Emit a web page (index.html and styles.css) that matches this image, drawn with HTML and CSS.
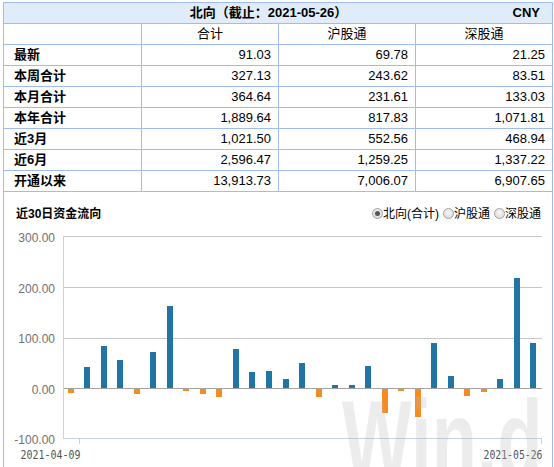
FILE: index.html
```html
<!DOCTYPE html>
<html lang="zh-CN">
<head>
<meta charset="utf-8">
<title>北向资金</title>
<link rel="stylesheet" href="styles.css">
</head>
<body>
<div class="panel">
  <div class="hdr"><span class="ttl">北向（截止：2021-05-26）</span><span class="cur">CNY</span></div>
  <div class="row colhead"><div class="c"></div><div class="c">合计</div><div class="c">沪股通</div><div class="c">深股通</div></div>
  <div class="row"><div class="c lab">最新</div><div class="c num">91.03</div><div class="c num">69.78</div><div class="c num">21.25</div></div>
  <div class="row"><div class="c lab">本周合计</div><div class="c num">327.13</div><div class="c num">243.62</div><div class="c num">83.51</div></div>
  <div class="row"><div class="c lab">本月合计</div><div class="c num">364.64</div><div class="c num">231.61</div><div class="c num">133.03</div></div>
  <div class="row"><div class="c lab">本年合计</div><div class="c num">1,889.64</div><div class="c num">817.83</div><div class="c num">1,071.81</div></div>
  <div class="row"><div class="c lab">近3月</div><div class="c num">1,021.50</div><div class="c num">552.56</div><div class="c num">468.94</div></div>
  <div class="row"><div class="c lab">近6月</div><div class="c num">2,596.47</div><div class="c num">1,259.25</div><div class="c num">1,337.22</div></div>
  <div class="row"><div class="c lab">开通以来</div><div class="c num">13,913.73</div><div class="c num">7,006.07</div><div class="c num">6,907.65</div></div>
  <div class="chart">
    <div class="chart-top">
      <span class="chart-title">近30日资金流向</span>
      <div class="radios">
        <span class="radio on"></span><span class="rl">北向(合计)</span>
        <span class="radio"></span><span class="rl">沪股通</span>
        <span class="radio"></span><span class="rl">深股通</span>
      </div>
    </div>
    <svg class="plot" width="548" height="250" viewBox="4 224 548 250">
      <g class="grid">
        <line x1="63" x2="542" y1="236.5" y2="236.5"/>
        <line x1="63" x2="542" y1="287.5" y2="287.5"/>
        <line x1="63" x2="542" y1="338.5" y2="338.5"/>
      </g>
      <g class="yl">
        <text x="55" y="242">300.00</text>
        <text x="55" y="292.5">200.00</text>
        <text x="55" y="343">100.00</text>
        <text x="55" y="393.5">0.00</text>
        <text x="55" y="444">-100.00</text>
      </g>
      <g class="pos">
        <rect x="84" y="367" width="6" height="21"/>
        <rect x="101" y="346" width="6" height="42"/>
        <rect x="117" y="360" width="6" height="28"/>
        <rect x="150" y="352" width="6" height="36"/>
        <rect x="167" y="306" width="6" height="82"/>
        <rect x="233" y="349" width="6" height="39"/>
        <rect x="249" y="372" width="6" height="16"/>
        <rect x="266" y="371" width="6" height="17"/>
        <rect x="283" y="379" width="6" height="9"/>
        <rect x="299" y="363" width="6" height="25"/>
        <rect x="332" y="385" width="6" height="3"/>
        <rect x="349" y="385" width="6" height="3"/>
        <rect x="365" y="366" width="6" height="22"/>
        <rect x="431" y="343" width="6" height="45"/>
        <rect x="448" y="376" width="6" height="12"/>
        <rect x="497" y="379" width="6" height="9"/>
        <rect x="514" y="278" width="6" height="110"/>
        <rect x="530" y="343" width="6" height="45"/>
      </g>
      <g class="neg">
        <rect x="68" y="389" width="6" height="4"/>
        <rect x="134" y="389" width="6" height="5"/>
        <rect x="183" y="389" width="6" height="2"/>
        <rect x="200" y="389" width="6" height="5"/>
        <rect x="216" y="389" width="6" height="8"/>
        <rect x="316" y="389" width="6" height="8"/>
        <rect x="382" y="389" width="6" height="24"/>
        <rect x="398" y="389" width="6" height="2"/>
        <rect x="415" y="389" width="6" height="28"/>
        <rect x="464" y="389" width="6" height="7"/>
        <rect x="481" y="389" width="6" height="3"/>
      </g>
      <line class="zero" x1="63" x2="542" y1="388.5" y2="388.5"/>
      <g class="axis">
        <line x1="63.5" x2="63.5" y1="236" y2="439"/>
        <line x1="63" x2="542" y1="438.5" y2="438.5"/>
        <line x1="79.5" x2="79.5" y1="438" y2="444"/>
        <line x1="541.5" x2="541.5" y1="438" y2="444"/>
      </g>
      <g class="xl">
        <text x="20.5" y="459" textLength="60" lengthAdjust="spacingAndGlyphs">2021-04-09</text>
        <text x="483.5" y="459" textLength="59" lengthAdjust="spacingAndGlyphs">2021-05-26</text>
      </g>
    </svg>
    <div class="watermark">Win.d</div>
  </div>
</div>
</body>
</html>
```

FILE: styles.css
```css
* { box-sizing: border-box; }
html, body { overflow: hidden; }
body {
  margin: 2px 0 0 3px;
  background: #fff;
  color: #000;
  font-family: "Liberation Sans", "Noto Sans CJK SC", sans-serif;
  font-size: 13px;
}
.panel {
  width: 550px;
  height: 480px;
  border: 1px solid #9ebcf0;
}
.hdr {
  display: grid;
  grid-template-columns: 1fr auto 1fr;
  height: 21px;
  line-height: 20px;
  background: #e1ecfa;
  border-bottom: 1px solid #9ebcf0;
  font-weight: bold;
}
.ttl { grid-column: 2; margin-right: 19px; }
.cur { grid-column: 3; justify-self: end; padding-right: 12px; }
.row {
  display: grid;
  grid-template-columns: 137px 137px 137px 137px;
  height: 21px;
  line-height: 20px;
  border-bottom: 1px solid #9ebcf0;
}
.c { border-left: 1px solid #9ebcf0; white-space: nowrap; }
.c:first-child { border-left: 0; }
.colhead .c { text-align: center; }
.lab { padding-left: 10px; font-weight: bold; }
.num { text-align: right; padding-right: 7px; }

.chart { position: relative; overflow: hidden; height: 300px; }
.chart-top {
  display: flex;
  justify-content: space-between;
  align-items: center;
  height: 32px;
  padding: 12px 11px 0 12px;
  line-height: 20px;
  font-size: 12px;
}
.chart-title { font-weight: bold; }
.radios { display: flex; align-items: center; }
.rl { margin-right: 4px; }
.rl:last-child { margin-right: 0; }
.radio {
  position: relative;
  width: 11px;
  height: 11px;
  margin-top: -1px;
  border-radius: 50%;
  border: 1px solid #a2a2a2;
  background: radial-gradient(circle at 50% 40%, #f6f6f6, #d6d6d6);
}
.radio.on::after {
  content: "";
  position: absolute;
  left: 2px;
  top: 2px;
  width: 5px;
  height: 5px;
  border-radius: 50%;
  background: #555;
}
.plot { display: block; }
.grid line { stroke: #c6c6c6; stroke-width: 1; }
.zero { stroke: #a3a3a3; stroke-width: 1; }
.axis line { stroke: #c4d2e4; stroke-width: 1; }
.yl text {
  text-anchor: end;
  font-family: "Liberation Sans", sans-serif;
  font-size: 12px;
  fill: #707070;
}
.xl text {
  font-family: "DejaVu Sans Mono", monospace;
  font-size: 11.5px;
  fill: #555;
}
.pos rect { fill: #2274a5; }
.neg rect { fill: #f68b1f; }
.watermark {
  position: absolute;
  left: 338px;
  top: 192px;
  font-family: "Liberation Sans", sans-serif;
  font-weight: bold;
  font-size: 112px;
  line-height: 112px;
  color: rgba(185, 185, 185, 0.28);
  white-space: nowrap;
  transform: scaleX(0.66);
  transform-origin: 0 0;
}
```
